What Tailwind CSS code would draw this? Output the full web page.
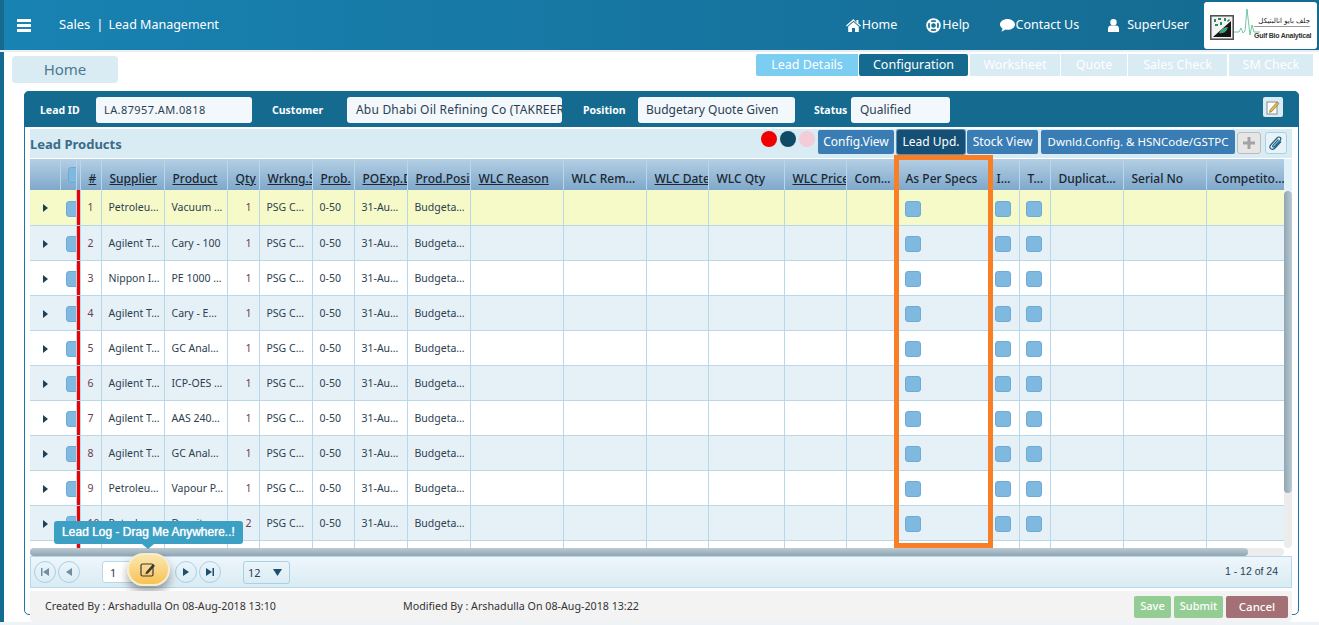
<!DOCTYPE html>
<html lang="en">

<head>
    <meta charset="UTF-8">
    <title>Lead Management</title>
    <script src="https://cdn.jsdelivr.net/npm/@tailwindcss/browser@4"></script>
</head>

<body class="bg-white h-[625px] w-[1319px] overflow-hidden font-['Noto_Sans',sans-serif] text-[#2c3e50]">

    <!-- Top bar -->
    <header class="h-[50px] flex items-center bg-gradient-to-r from-[#1882b2] to-[#156a90] text-white border-l-4 border-[#156a90]">
        <div class="ml-[13px] w-[14px] flex flex-col gap-[2px]">
            <span class="h-[3px] bg-white"></span>
            <span class="h-[3px] bg-white"></span>
            <span class="h-[3px] bg-white"></span>
        </div>
        <span class="ml-[28px] text-[13px]">Sales</span>
        <span class="ml-[6px] text-[13px]">|</span>
        <span class="ml-[5px] text-[12.5px]">Lead Management</span>

        <nav class="ml-auto flex items-center text-[12.5px]">
            <a class="flex items-center gap-[1px]">
                <svg width="15" height="13" viewBox="0 0 15 13" fill="white"><path d="M7.5 0 0 6.6l.8.9L7.5 1.8l6.7 5.7.8-.9-2.6-2.2V1h-2v2.5z"/><path d="M2.2 7.5 7.5 3l5.3 4.5V13H9V9H6v4H2.2z"/></svg>
                Home
            </a>
            <a class="flex items-center gap-[1px] ml-[29px]">
                <svg width="15" height="15" viewBox="0 0 15 15" fill="none" stroke="white"><circle cx="7.5" cy="7.5" r="6.4" stroke-width="1.8"/><circle cx="7.5" cy="7.5" r="3" stroke-width="1.4"/><path d="M3 3l2.5 2.5M12 3 9.5 5.5M3 12l2.5-2.5M12 12 9.500 9.500" stroke-width="2.400"/></svg>
                Help
            </a>
            <a class="flex items-center gap-[1px] ml-[30px]">
                <svg width="15" height="13" viewBox="0 0 15 13" fill="white"><path d="M7.500 0C3.400 0 0 2.400 0 5.500c0 1.700 1 3.200 2.600 4.200-.2.900-.7 1.900-1.400 2.800 1.500-.2 3-.9 4-1.900.7.100 1.500.2 2.300.2 4.100 0 7.500-2.400 7.500-5.300S11.600 0 7.500 0z"/></svg>
                Contact Us
            </a>
            <a class="flex items-center gap-[8px] ml-[29px]">
                <svg width="11" height="13" viewBox="0 0 11 13" fill="white"><circle cx="5.500" cy="3.200" r="3.200"/><path d="M0 13V9.500C0 7.800 1.400 6.500 3 6.500h5c1.600 0 3 1.300 3 3V13z"/></svg>
                SuperUser
            </a>
        </nav>

        <!-- Logo -->
        <div class="ml-[15px] mr-[2px] w-[113px] h-[47px] bg-white rounded-[3px] flex items-center relative overflow-hidden">
            <svg class="ml-[6px] mt-[5px]" width="24" height="25" viewBox="0 0 24 25"><rect x=".8" y=".8" width="22.400" height="23.400" fill="#f2f2f2" stroke="#4a4a4a" stroke-width="1.500"/><path d="M3 22 21 6v16z" fill="#141414"/><path d="M9 18c2-4 5-6 9-6-1 4-4 7-9 6z" fill="#3aa877"/><path d="M4 4h2v3H4zM8 3h3v2H8zM14 3h2v3h-2zM5 9h3v2H5zM10 7h2v3h-2zM19 4l1 1-2 2-1-1z" fill="#2a8a5e"/></svg>
            <svg width="26" height="34" viewBox="0 0 26 34" fill="none" stroke="#4fb98b"><path d="M0 24h5l2-4 2 5 2-2 2-22 3 26 2-10 2 7h6" stroke-width=".8"/></svg>
            <div class="absolute right-[7px] top-[16px] w-[56px] text-right leading-none">
                <div class="text-[7px] text-[#222] font-['DejaVu_Sans',sans-serif] border-b border-[#9a9a9a] pb-[1px]" dir="rtl">جلف بايو انالبتيكل</div>
                <div class="text-[7px] mt-[5px] font-bold font-['Liberation_Sans',sans-serif] text-[#333] whitespace-nowrap tracking-[-0.25px]">Gulf Bio Analytical</div>
            </div>
        </div>
    </header>

    <div class="h-[2px] bg-[#e9eef2]"></div>

    <div class="flex h-[570px]">
        <div class="w-[4px] bg-[#156a90]"></div>

        <main class="flex-1">
            <!-- Home + tabs -->
            <div class="h-[39px] relative flex">
                <button class="ml-[8px] mt-[4px] w-[106px] h-[27px] rounded-[4px] bg-[#d9ebf3] text-[#4a7a95] text-[15px] leading-[27px]">Home</button>
                <div class="ml-auto mr-[6px] mt-[2px] flex gap-[1px] text-[12.5px] h-[22px] leading-[21px] text-center text-white">
                    <span class="w-[102px] rounded-l-[2px] bg-[#7ccdf2]">Lead Details</span>
                    <span class="w-[109px] rounded-[2px] bg-[#156a90]">Configuration</span>
                    <span class="w-[90px] ml-[1px] bg-[#d9ebf3]">Worksheet</span>
                    <span class="w-[66px] bg-[#d9ebf3]">Quote</span>
                    <span class="w-[99px] bg-[#d9ebf3]">Sales Check</span>
                    <span class="w-[84px] ml-[1px] bg-[#d9ebf3]">SM Check</span>
                </div>
            </div>

            <!-- Panel -->
            <section class="ml-[20px] w-[1275px] h-[524px] border border-[#1d75a0] rounded-[5px]">
                <!-- Lead header -->
                <div class="h-[36px] -mx-px -mt-px rounded-t-[5px] bg-[#156a90] flex items-start pt-[6px] text-[10.5px] leading-[26px]">
                    <label class="ml-[16px] w-[56px] font-bold text-white">Lead ID</label>
                    <div class="w-[156px] h-[26px] rounded-[3px] bg-[#f3f8fc] pl-[8px] text-[11px] tracking-[0.4px]">LA.87957.AM.0818</div>
                    <label class="ml-[20px] w-[75px] font-bold text-white">Customer</label>
                    <div class="w-[215px] h-[26px] rounded-[3px] bg-[#f3f8fc] pl-[9px] text-[12px] tracking-[0.2px] overflow-hidden whitespace-nowrap">Abu Dhabi Oil Refining Co (TAKREER)</div>
                    <label class="ml-[21px] w-[55px] font-bold text-white">Position</label>
                    <div class="w-[157px] h-[26px] rounded-[3px] bg-[#f3f8fc] pl-[8px] text-[12px]">Budgetary Quote Given</div>
                    <label class="ml-[19px] w-[37px] font-bold text-white">Status</label>
                    <div class="w-[99px] h-[26px] rounded-[3px] bg-[#f3f8fc] pl-[9px] text-[12px]">Qualified</div>
                    <button class="ml-[313px] w-[20px] h-[20px] rounded-[2px] bg-[#d9ebf3] flex items-center justify-center">
                        <svg width="14" height="15" viewBox="0 0 14 15" fill="none"><rect x="1" y="2" width="10" height="12" fill="#fff" stroke="#8a8a8a"/><path d="M4 10 11 2l2 1.500-7 8-2.500 1z" fill="#e8b64c" stroke="#7a6a3a" stroke-width=".6"/></svg>
                    </button>
                </div>

                <div class="ml-[5px] w-[1262px] mt-[2px] relative">
                    <!-- Products toolbar -->
                    <div class="h-[29px] bg-[#d9ebf3] flex items-start pt-px">
                        <h2 class="mt-[5px] text-[13px] font-bold text-[#3a6b88] w-[731px]">Lead Products</h2>
                        <span class="w-[16px] h-[16px] mt-[1px] rounded-full bg-[#f00000]"></span>
                        <span class="w-[16px] h-[16px] mt-[1px] ml-[3px] rounded-full bg-[#0f4a66]"></span>
                        <span class="w-[16px] h-[16px] mt-[1px] ml-[3px] rounded-full bg-[#f3ccd8]"></span>
                        <button class="ml-[3px] w-[76px] h-[24px] rounded-[2px] bg-[#3a7db5] text-white text-[12px]">Config.View</button>
                        <button class="ml-[3px] w-[68px] h-[24px] rounded-[2px] bg-[#164f75] text-white text-[12px] ring-1 ring-[#5b8fb8]">Lead Upd.</button>
                        <button class="ml-[2px] w-[71px] h-[24px] rounded-[2px] bg-[#3a7db5] text-white text-[12px]">Stock View</button>
                        <button class="ml-[3px] w-[194px] h-[24px] rounded-[2px] bg-[#3a7db5] text-white text-[11.5px]">Dwnld.Config. &amp; HSNCode/GSTPC</button>
                        <button class="ml-[2px] mt-[2px] w-[24px] h-[22px] rounded-[3px] bg-[#e6e6e6] border border-[#bcbcbc] flex items-center justify-center">
                            <svg width="12" height="12" viewBox="0 0 12 12" fill="#a3a3a3"><path d="M4.500 0h3v4.500H12v3H7.500V12h-3V7.500H0v-3h4.500z"/></svg>
                        </button>
                        <button class="ml-[4px] mt-[2px] w-[22px] h-[22px] rounded-[3px] bg-[#e8f3f8] border border-[#a9d0e4] flex items-center justify-center">
                            <svg width="14" height="15" viewBox="0 0 14 15" fill="none" stroke="#1c5f85" stroke-width="1.200"><path d="M12 5.500 6 12c-1.500 1.600-3.400 1.700-4.400.7-1-1-.9-2.700.5-4.200L8 2c1.100-1.200 2.500-1.300 3.300-.5.800.8.700 2-.3 3.100L5.500 10.500c-.6.600-1.200.7-1.600.3-.4-.4-.3-1 .3-1.600L9.500 3.500"/></svg>
                        </button>
                    </div>

                    <div class="h-px"></div>

                    <!-- Grid -->
                    <div class="flex h-[389px]">
                        <div class="w-[1254px] overflow-hidden">
                            <table class="table-fixed border-collapse w-[1254px] text-[10.5px]">
                                <colgroup id="cols"></colgroup>
                                <thead>
                                    <tr id="head" class="h-[31px] bg-gradient-to-b from-[#b4cfe4] to-[#7fa8cb] text-[12px] text-[#1b2733]"></tr>
                                </thead>
                                <tbody id="rows"></tbody>
                            </table>
                        </div>
                        <!-- Vertical scrollbar -->
                        <div class="w-[8px] flex flex-col">
                            <div class="h-[32px] bg-[#e2f0f7]"></div>
                            <div class="flex-1 bg-[#ececec] rounded-full">
                                <div class="h-[302px] rounded-full bg-gradient-to-r from-[#8fa6b3] to-[#bccad2]"></div>
                            </div>
                        </div>
                    </div>

                    <!-- Horizontal scrollbar -->
                    <div class="h-[8px] w-[1254px] bg-[#ececec] rounded-full">
                        <div class="h-[8px] w-[1218px] rounded-full bg-gradient-to-b from-[#bccad2] to-[#8fa6b3]"></div>
                    </div>

                    <!-- Pager -->
                    <div class="h-[32px] bg-gradient-to-b from-[#eef6fb] to-[#d9ebf3] border border-[#b8d8ea] flex items-center text-[#2c3e50]">
                        <button class="ml-[3px] w-[22px] h-[22px] rounded-full border border-[#a9d0e4] flex items-center justify-center">
                            <svg width="8" height="8" viewBox="0 0 8 8" fill="#6f8ea3"><path d="M0 0h1.500v8H0zM8 0v8L2 4z"/></svg>
                        </button>
                        <button class="ml-[2px] w-[22px] h-[22px] rounded-full border border-[#a9d0e4] flex items-center justify-center">
                            <svg width="6" height="8" viewBox="0 0 6 8" fill="#6f8ea3"><path d="M6 0v8L0 4z"/></svg>
                        </button>
                        <div class="ml-[22px] w-[50px] h-[22px] rounded-[3px] bg-white border border-[#b8d8ea] pl-[7px] text-[11px] leading-[21px]">1</div>
                        <button class="ml-[23px] w-[22px] h-[22px] rounded-full border border-[#a9d0e4] flex items-center justify-center">
                            <svg width="6" height="8" viewBox="0 0 6 8" fill="#1c4f70"><path d="M0 0v8l6-4z"/></svg>
                        </button>
                        <button class="ml-[2px] w-[22px] h-[22px] rounded-full border border-[#a9d0e4] flex items-center justify-center">
                            <svg width="8" height="8" viewBox="0 0 8 8" fill="#1c4f70"><path d="M0 0v8l6-4zM6.500 0H8v8H6.500z"/></svg>
                        </button>
                        <div class="ml-[22px] w-[47px] h-[23px] rounded-[3px] border border-[#a9d0e4] pl-[4px] text-[11px] leading-[21px] flex items-center justify-between pr-[7px]">
                            12
                            <svg width="9" height="7" viewBox="0 0 9 7" fill="#1c4f70"><path d="M0 0h9L4.500 7z"/></svg>
                        </div>
                        <span class="ml-auto mr-[13px] font-['Liberation_Sans',sans-serif] text-[10.5px]">1 - 12 of 24</span>
                    </div>

                    <!-- Form footer -->
                    <div class="mt-[3px] h-[31px] w-[1262px] bg-[#f3f3f3] rounded-b-[4px] flex items-center text-[10.7px] text-[#333] relative z-10">
                        <span class="ml-[15px] w-[358px]">Created By : Arshadulla On 08-Aug-2018 13:10</span>
                        <span>Modified By : Arshadulla On 08-Aug-2018 13:22</span>
                        <button class="ml-auto w-[37px] h-[22px] rounded-[2px] bg-[#94cd94] text-white text-[11px] font-medium">Save</button>
                        <button class="ml-[3px] w-[49px] h-[22px] rounded-[2px] bg-[#94cd94] text-white text-[11px] font-medium">Submit</button>
                        <button class="ml-[3px] mr-[4px] w-[62px] h-[22px] rounded-[2px] bg-[#a37076] text-white text-[11.5px] font-medium">Cancel</button>
                    </div>

                    <!-- Annotation over the As Per Specs column -->
                    <div class="absolute left-[864px] top-[26px] w-[99px] h-[393px] border-[5px] border-[#f97f27] pointer-events-none"></div>

                    <!-- Floating lead log -->
                    <div class="absolute left-[24px] top-[392px] w-[189px] h-[23px] rounded-[3px] bg-[#3ba0c4] text-white text-center font-['Liberation_Sans',sans-serif] text-[12px] leading-[22px] [text-shadow:0_0_1px_white]">
                        Lead Log - Drag Me Anywhere..!
                        <span class="absolute left-[88px] top-[23px] w-0 h-0 border-x-[6px] border-x-transparent border-t-[5px] border-t-[#3ba0c4]"></span>
                    </div>
                    <button class="absolute left-[97px] top-[424px] w-[43px] h-[33px] rounded-full bg-gradient-to-b from-[#fbe7ae] to-[#f8c24f] border-2 border-[#f6ecd0] shadow-[0_6px_10px_rgba(0,0,0,0.35)] flex items-center justify-center">
                        <svg width="17" height="15" viewBox="0 0 17 15" fill="none"><rect x="1" y="2" width="12" height="12" rx="1.500" stroke="#3a3a3a" stroke-width="1.200"/><path d="M6 10 13 2l2 1.800-7 7.700-2.600.7z" fill="#3a3a3a"/></svg>
                    </button>
                </div>
            </section>
        </main>
    </div>

    <div class="h-[3px] bg-[#eef3f7]"></div>

    <script>
        // Column widths read off the reference
        const widths = [30, 16, 4, 21, 63, 63, 32, 53, 42, 53, 63, 93, 83, 62, 76, 62, 51, 91, 31, 31, 73, 83, 78];
        document.getElementById('cols').innerHTML = widths.map(w => `<col style="width:${w}px">`).join('');

        const box = '<span class="block w-[16px] h-[16px] mt-[3px] rounded-[3px] bg-[#7fb9e0] border border-[#6cabd9]"></span>';

        const titles = [
            ['', 0], ['', 0], ['', 0],
            ['#', 1], ['Supplier', 1], ['Product', 1], ['Qty', 1], ['Wrkng.Status', 1], ['Prob.', 1], ['POExp.Date', 1], ['Prod.Position', 1],
            ['WLC Reason', 1], ['WLC Rem…', 0], ['WLC Date', 1], ['WLC Qty', 0], ['WLC Price', 1], ['Com…', 0],
            ['As Per Specs', 0], ['I…', 0], ['T…', 0], ['Duplicat…', 0], ['Serial No', 0], ['Competito…', 0]
        ];
        document.getElementById('head').innerHTML = titles.map(([t, sorted], c) => {
            if (c === 1) return '<th class="border-r border-[#b8d8ea] p-0 overflow-hidden"><span class="block ml-[7px] -mr-[2px] w-[10px] h-[16px] rounded-l-[3px] bg-[#7fb9e0] border border-[#6cabd9]"></span></th>';
            return `<th class="border-r border-[#b8d8ea] pl-[8px] pr-0 pt-[9px] font-medium text-left whitespace-nowrap overflow-hidden ${sorted ? 'underline' : ''}">${t}</th>`;
        }).join('');

        const suppliers = ['Petroleu…', 'Agilent T…', 'Nippon I…', 'Agilent T…', 'Agilent T…', 'Agilent T…', 'Agilent T…', 'Agilent T…', 'Petroleu…', 'Petroleu…', ''];
        const products = ['Vacuum …', 'Cary - 100', 'PE 1000 …', 'Cary - E…', 'GC Anal…', 'ICP-OES …', 'AAS 240…', 'GC Anal…', 'Vapour P…', 'Density …', ''];

        document.getElementById('rows').innerHTML = suppliers.map((s, i) => {
            const bg = i === 0 ? 'bg-[#f5fac8]' : (i % 2 ? 'bg-[#e6f1f7]' : 'bg-white');
            const td = 'border-r border-b border-[#b8d8ea] px-[7px] pt-[2px] whitespace-nowrap overflow-hidden';
            const last = i === 10;
            const text = v => last ? '' : v;
            const empties = n => `<td class="${td}"></td>`.repeat(n);
            const check = `<td class="border-r border-b border-[#b8d8ea] pl-[6px]">${last ? '' : box}</td>`;
            return `<tr class="h-[35px] ${bg}">
                <td class="border-b border-[#b8d8ea] pl-[13px] pt-[2px]">${last ? '' : '<svg width="5" height="8" viewBox="0 0 5 8" fill="#1f3f55"><path d="M0 0v8l5-4z"/></svg>'}</td>
                <td class="border-r border-b border-[#b8d8ea] overflow-hidden pl-[6px]">${last ? '' : box}</td>
                <td class="border-r border-b border-[#b8d8ea] bg-[#f00000]"></td>
                <td class="${td} text-[#6b3a55]">${text(i + 1)}</td>
                <td class="${td}">${s}</td>
                <td class="${td}">${products[i]}</td>
                <td class="${td} text-right text-[#6b3a55]">${text(i === 9 ? 2 : 1)}</td>
                <td class="${td}">${text('PSG C…')}</td>
                <td class="${td}">${text('0-50')}</td>
                <td class="${td}">${text('31-Au…')}</td>
                <td class="${td}">${text('Budgeta…')}</td>
                ${empties(6)}
                <td class="border-r border-b border-[#b8d8ea] pl-[7px]">${last ? '' : box}</td>
                ${check}${check}
                ${empties(3)}
            </tr>`;
        }).join('');
    </script>

</body>

</html>
